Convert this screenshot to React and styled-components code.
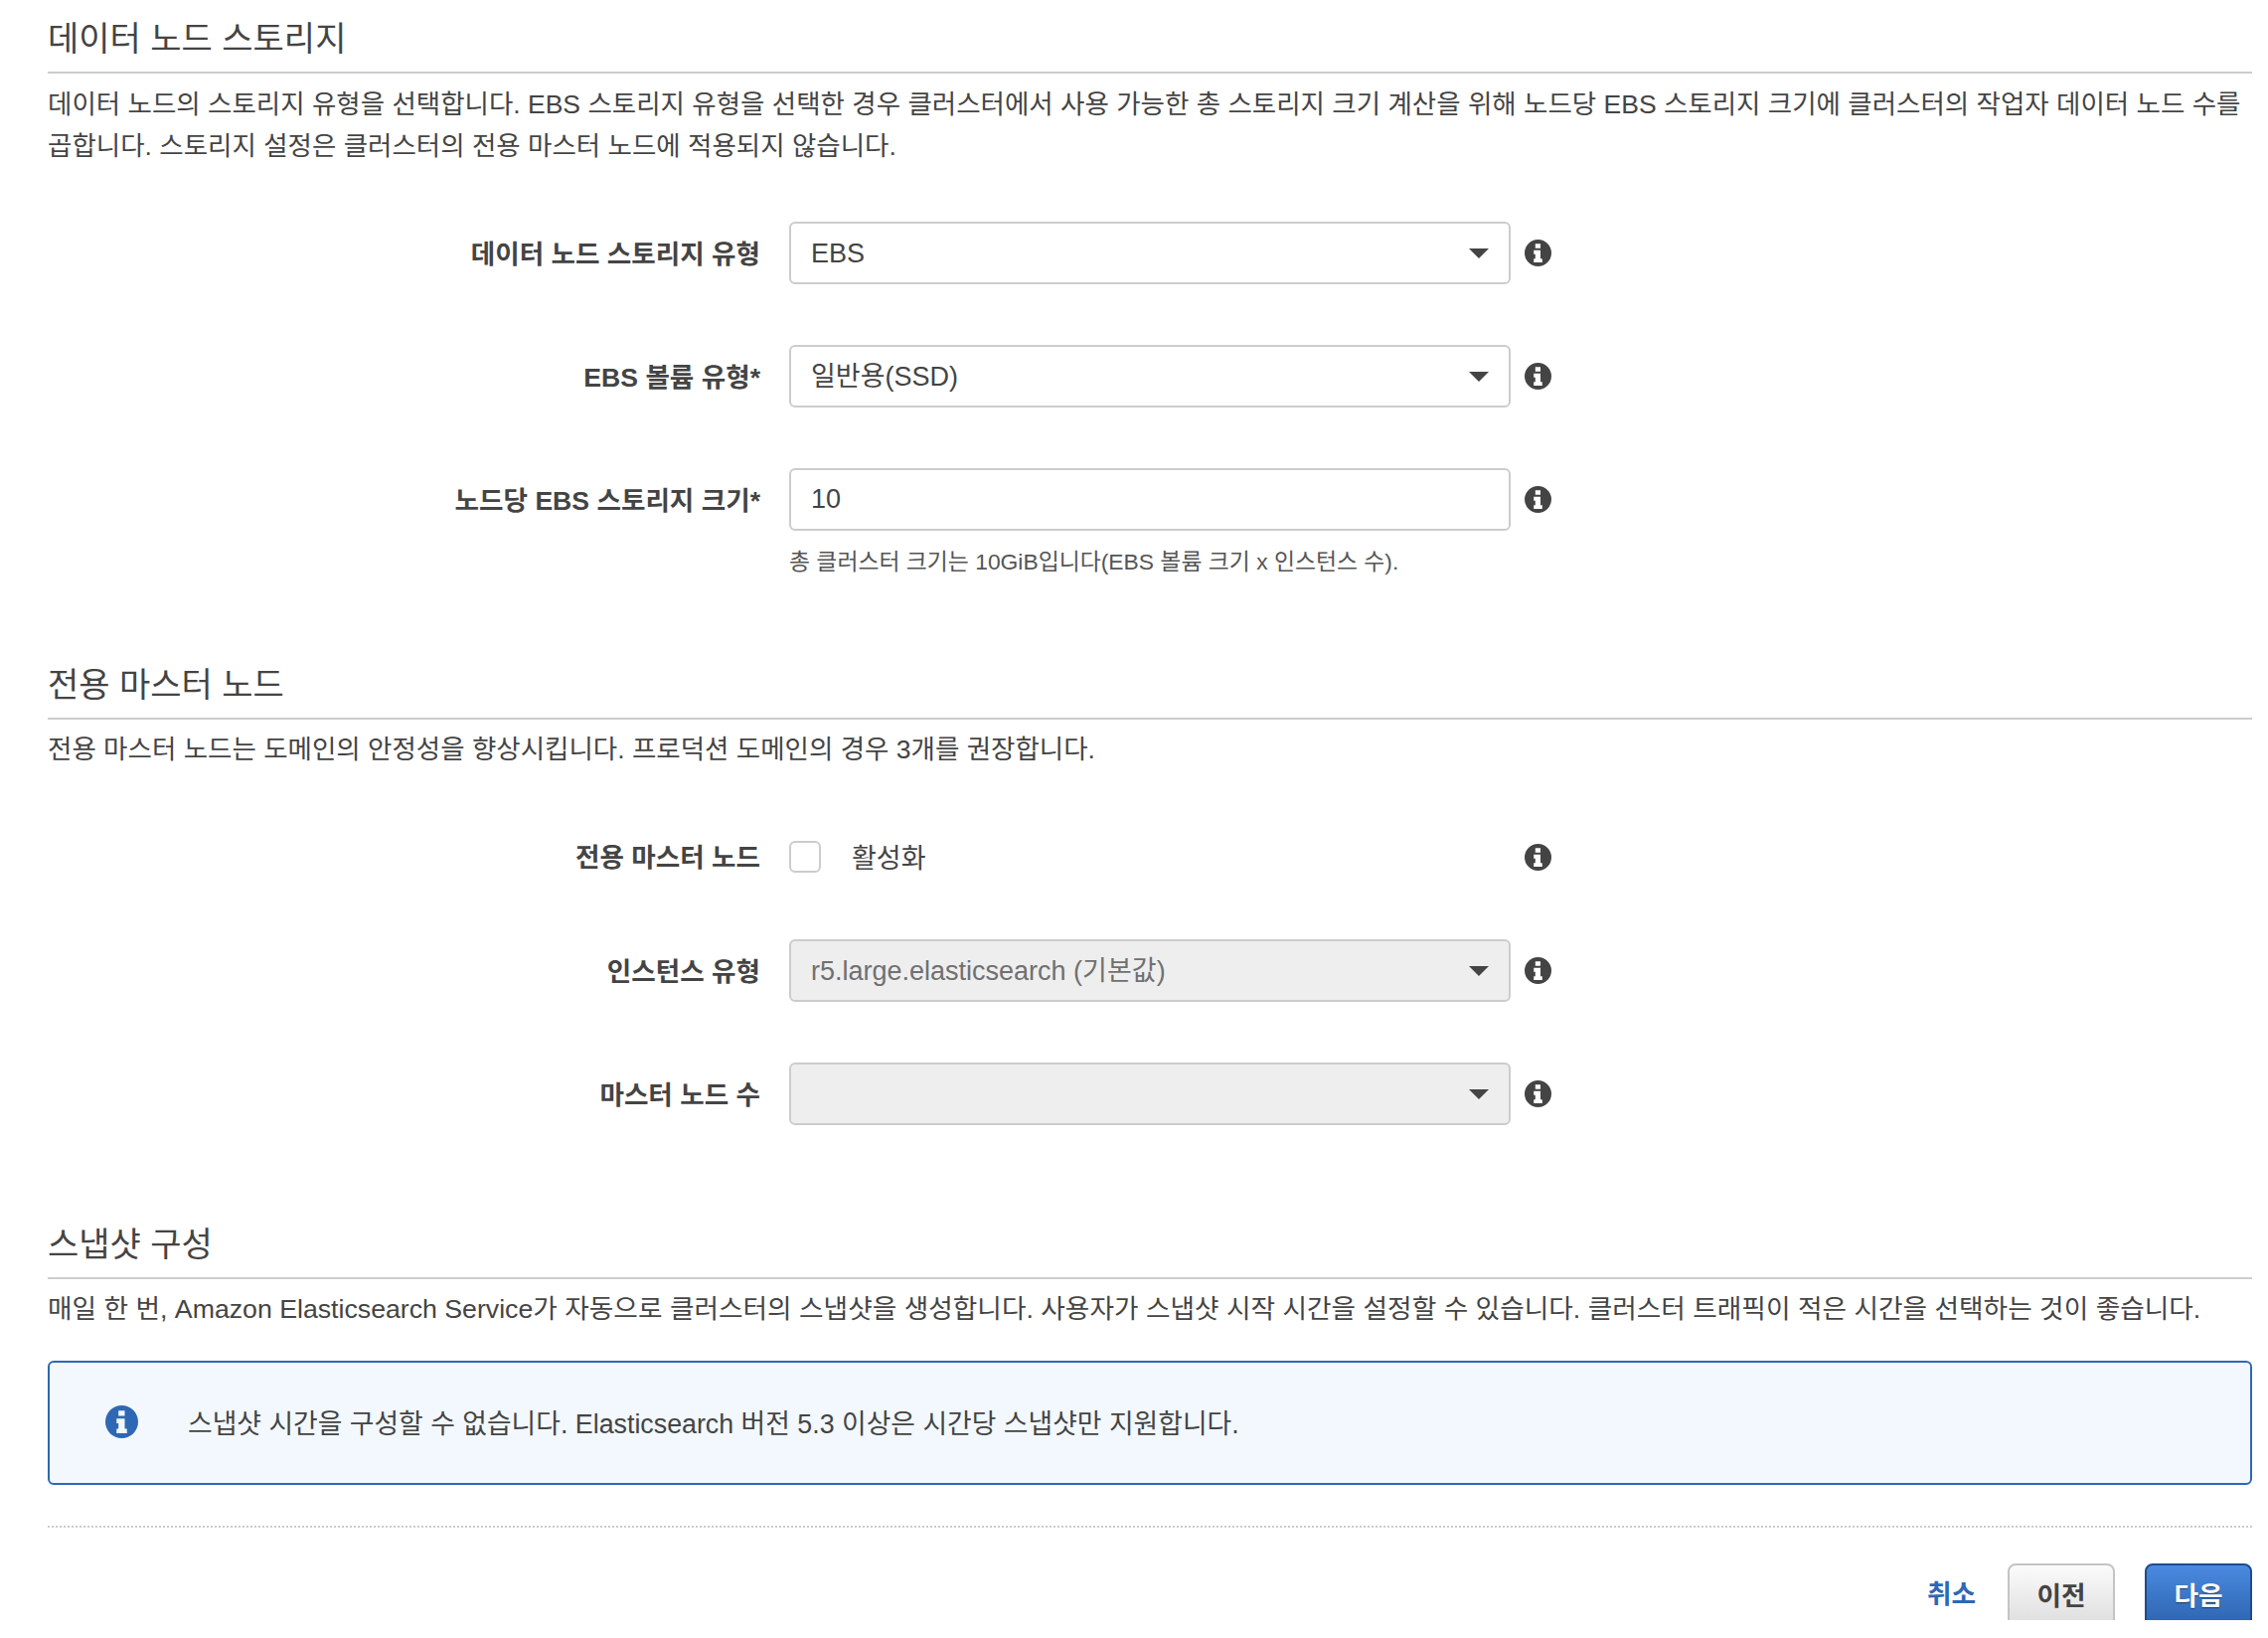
import React from "react";
import styled, { createGlobalStyle } from "styled-components";

const GlobalStyle = createGlobalStyle`
  html, body {
    margin: 0;
    padding: 0;
    background: #fff;
  }
  body {
    font-family: "Liberation Sans", "Noto Sans CJK KR", sans-serif;
    color: #444;
  }
`;

const Page = styled.div`
  width: 2282px;
  height: 1630px;
  overflow: hidden;
  box-sizing: border-box;
  padding: 0 16px 0 48px;
`;

const Section = styled.section`
  margin-top: ${(p) => p.$top || 0}px;
`;

const Heading = styled.h2`
  margin: 0;
  height: 74px;
  box-sizing: border-box;
  border-bottom: 2px solid #ccc;
  font-size: 34px;
  font-weight: 400;
  line-height: 79px;
  color: #444;
`;

const Description = styled.p`
  margin: ${(p) => p.$top}px 0 0;
  font-size: ${(p) => p.$size}px;
  line-height: 42px;
  color: #444;
`;

const FormRow = styled.div`
  display: grid;
  grid-template-columns: 746px 726px 41px;
  align-items: center;
  margin-top: ${(p) => p.$top}px;
`;

const Label = styled.label`
  padding: 2px 29px 0 0;
  font-size: 26.6px;
  line-height: 32px;
  font-weight: 700;
  text-align: right;
  color: #444;
`;

const SelectWrap = styled.div`
  position: relative;
  height: 63px;

  &::after {
    content: "";
    position: absolute;
    top: 27px;
    right: 22px;
    border-style: solid;
    border-width: 10px 10px 0;
    border-color: #444 transparent transparent;
  }
`;

const Select = styled.select`
  appearance: none;
  width: 100%;
  height: 100%;
  box-sizing: border-box;
  padding: 0 20px;
  border: 2px solid #ccc;
  border-radius: 6px;
  background: #fff;
  font: 27px "Liberation Sans", "Noto Sans CJK KR", sans-serif;
  color: #444;
  opacity: 1;

  &:disabled {
    background: #eee;
    color: #707070;
  }
`;

const TextInput = styled.input`
  display: block;
  width: 100%;
  height: 63px;
  box-sizing: border-box;
  padding: 0 20px;
  border: 2px solid #ccc;
  border-radius: 6px;
  font: 27px "Liberation Sans", "Noto Sans CJK KR", sans-serif;
  color: #444;
`;

const IconSvg = styled.svg`
  display: block;
  flex: none;
  width: ${(p) => p.$size}px;
  height: ${(p) => p.$size}px;
  margin-left: ${(p) => p.$left || 0}px;
  margin-right: ${(p) => p.$right || 0}px;
  color: ${(p) => p.$color};
`;

const InfoIcon = ({ size = 27, left = 14, right, color = "#444" }) => (
  <IconSvg viewBox="0 0 24 24" $size={size} $left={left} $right={right} $color={color}>
    <path
      fill="currentColor"
      fillRule="evenodd"
      d="M12 0a12 12 0 1 0 0 24 12 12 0 0 0 0-24zM9.6 3.8h4.6v3.9H9.6zM8.2 9.6h6v7.4h1.6v3.4H8.2V17h1.4v-4H8.2z"
    />
  </IconSvg>
);

const Hint = styled.div`
  margin: 15px 0 0 746px;
  font-size: 22.85px;
  line-height: 32px;
  color: #555;
`;

const CheckLine = styled.div`
  display: flex;
  align-items: center;
  gap: 31px;
  height: 32px;
  font-size: 27px;
`;

const CheckText = styled.span`
  padding-bottom: 2px;
`;

const Checkbox = styled.span`
  display: block;
  flex: none;
  width: 32px;
  height: 32px;
  box-sizing: border-box;
  border: 2px solid #ccc;
  border-radius: 6px;
  background: #fff;
`;

const Alert = styled.div`
  display: flex;
  align-items: center;
  height: 125px;
  box-sizing: border-box;
  margin-top: 31px;
  padding: 0 0 2px 56px;
  border: 2px solid #2e68b5;
  border-radius: 6px;
  background: #f2f8fe;
  font-size: 26.8px;
`;

const Divider = styled.hr`
  margin: 41px 0 0;
  border: 0;
  border-top: 2px dotted #ccc;
`;

const Actions = styled.div`
  display: flex;
  justify-content: flex-end;
  align-items: flex-start;
  margin-top: 36px;
`;

const CancelLink = styled.a`
  margin-right: 32px;
  font-size: 26.7px;
  line-height: 63px;
  font-weight: 700;
  color: #2e68b5;
`;

const Button = styled.button`
  width: 108px;
  height: 68px;
  box-sizing: border-box;
  border: 2px solid ${(p) => (p.$primary ? "#1f4b8c" : "#c4c4c4")};
  border-radius: 8px;
  margin-left: ${(p) => (p.$primary ? 30 : 0)}px;
  padding: 0 0 8px;
  background: ${(p) =>
    p.$primary
      ? "linear-gradient(#4a8ae0, #2b62ad)"
      : "linear-gradient(#fbfbfb, #dcdcdc)"};
  font: 700 26.7px "Liberation Sans", "Noto Sans CJK KR", sans-serif;
  color: ${(p) => (p.$primary ? "#fff" : "#444")};
  text-shadow: ${(p) => (p.$primary ? "0 1px 1px rgba(0,0,0,.5)" : "none")};
`;

const SelectField = ({ label, value, disabled, top }) => (
  <FormRow $top={top}>
    <Label>{label}</Label>
    <SelectWrap>
      <Select disabled={disabled} defaultValue={value}>
        <option value={value}>{value}</option>
      </Select>
    </SelectWrap>
    <InfoIcon />
  </FormRow>
);

const App = () => (
  <Page>
    <GlobalStyle />
    <Section>
      <Heading>데이터 노드 스토리지</Heading>
      <Description $top={10} $size={26.5}>
        데이터 노드의 스토리지 유형을 선택합니다. EBS 스토리지 유형을 선택한 경우 클러스터에서 사용 가능한 총 스토리지 크기 계산을 위해 노드당 EBS 스토리지 크기에 클러스터의 작업자 데이터 노드 수를 곱합니다. 스토리지 설정은 클러스터의 전용 마스터 노드에 적용되지 않습니다.
      </Description>
      <SelectField label="데이터 노드 스토리지 유형" value="EBS" top={55} />
      <SelectField label="EBS 볼륨 유형*" value="일반용(SSD)" top={61} />
      <FormRow $top={61}>
        <Label>노드당 EBS 스토리지 크기*</Label>
        <TextInput defaultValue="10" />
        <InfoIcon />
      </FormRow>
      <Hint>총 클러스터 크기는 10GiB입니다(EBS 볼륨 크기 x 인스턴스 수).</Hint>
    </Section>

    <Section $top={69}>
      <Heading>전용 마스터 노드</Heading>
      <Description $top={9} $size={26.5}>
        전용 마스터 노드는 도메인의 안정성을 향상시킵니다. 프로덕션 도메인의 경우 3개를 권장합니다.
      </Description>
      <FormRow $top={70}>
        <Label>전용 마스터 노드</Label>
        <CheckLine>
          <Checkbox />
          <CheckText>활성화</CheckText>
        </CheckLine>
        <InfoIcon />
      </FormRow>
      <SelectField label="인스턴스 유형" value="r5.large.elasticsearch (기본값)" disabled top={66} />
      <SelectField label="마스터 노드 수" value="" disabled top={61} />
    </Section>

    <Section $top={81}>
      <Heading>스냅샷 구성</Heading>
      <Description $top={9} $size={26.7}>
        매일 한 번, Amazon Elasticsearch Service가 자동으로 클러스터의 스냅샷을 생성합니다. 사용자가 스냅샷 시작 시간을 설정할 수 있습니다. 클러스터 트래픽이 적은 시간을 선택하는 것이 좋습니다.
      </Description>
      <Alert>
        <InfoIcon size={33} left={0} right={50} color="#2e68b5" />
        스냅샷 시간을 구성할 수 없습니다. Elasticsearch 버전 5.3 이상은 시간당 스냅샷만 지원합니다.
      </Alert>
      <Divider />
      <Actions>
        <CancelLink>취소</CancelLink>
        <Button>이전</Button>
        <Button $primary>다음</Button>
      </Actions>
    </Section>
  </Page>
);

export default App;
